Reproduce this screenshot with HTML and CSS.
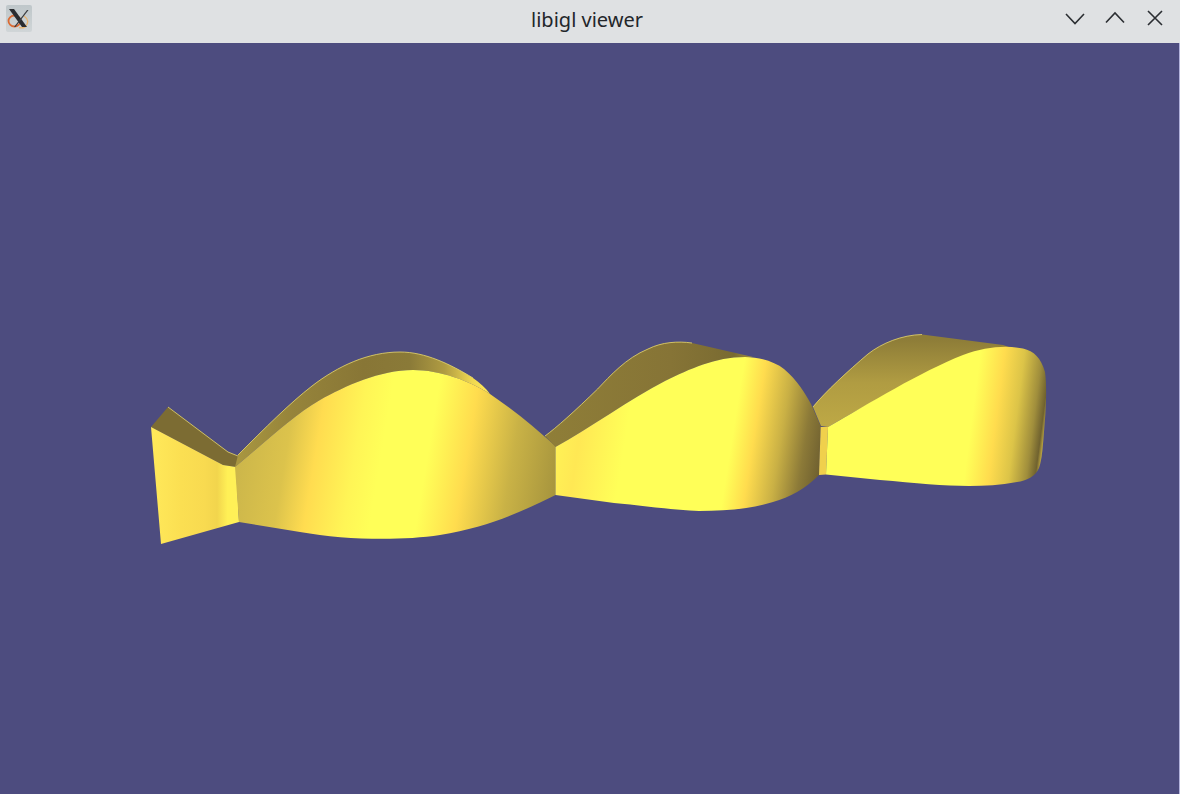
FILE: index.html
```html
<!DOCTYPE html>
<html lang="en">
<head>
<meta charset="utf-8">
<title>libigl viewer</title>
<link rel="stylesheet" href="styles.css">
</head>
<body>
<div class="window">
  <header class="titlebar">
    <svg class="app-icon" width="26" height="27" viewBox="0 0 26 27">
      <defs>
        <linearGradient id="tile" x1="0" y1="0" x2="0" y2="1">
          <stop offset="0" stop-color="#bfc7ca"/><stop offset="1" stop-color="#d0d5d7"/>
        </linearGradient>
      </defs>
      <rect width="26" height="27" rx="2" fill="url(#tile)"/>
      <ellipse cx="8.5" cy="16" rx="6" ry="5.5" fill="none" stroke="#dc6a32" stroke-width="1.8"/>
      <path d="M18 11 q7 5 1 11 q-3 1.500 -6 0.500" fill="none" stroke="#e9b470" stroke-width="1.4"/>
      <path d="M3 4 H8 L21 22 H16 Z" fill="#2a2c30"/>
      <path d="M21 5 H22.500 L9.500 22 H8 Z" fill="#3a3c40"/>
    </svg>
    <span class="title">libigl viewer</span>
    <div class="controls">
      <svg class="control" viewBox="0 0 40 36"><path d="M11 14 L20 23.500 L29 14" class="glyph"/></svg>
      <svg class="control" viewBox="0 0 40 36"><path d="M11 22.500 L20 13 L29 22.500" class="glyph"/></svg>
      <svg class="control" viewBox="0 0 40 36"><path d="M13 11 L27 25 M27 11 L13 25" class="glyph"/></svg>
    </div>
  </header>
  <main class="viewport">
    <svg class="scene" width="1179" height="751" viewBox="0 43 1179 751">
      <defs>
        <linearGradient id="g1" gradientUnits="userSpaceOnUse" x1="151" y1="0" x2="238" y2="0">
          <stop offset="0" stop-color="#ffe95a"/><stop offset=".35" stop-color="#fbdf52"/><stop offset=".62" stop-color="#f8da50"/><stop offset=".76" stop-color="#f2d54d"/><stop offset=".88" stop-color="#fff056"/><stop offset="1" stop-color="#fff058"/>
        </linearGradient>
        <linearGradient id="g2" gradientUnits="userSpaceOnUse" x1="235" y1="423" x2="556" y2="476">
          <stop offset="0" stop-color="#c9b44a"/><stop offset=".17" stop-color="#dcc34c"/><stop offset=".26" stop-color="#ffdc50"/><stop offset=".38" stop-color="#fff556"/><stop offset=".46" stop-color="#ffff58"/><stop offset=".6" stop-color="#ffff58"/><stop offset=".72" stop-color="#ffdc4e"/><stop offset=".86" stop-color="#c9b246"/><stop offset="1" stop-color="#a8963e"/>
        </linearGradient>
        <linearGradient id="g3" gradientUnits="userSpaceOnUse" x1="555" y1="420" x2="821" y2="462">
          <stop offset="0" stop-color="#fff356"/><stop offset=".1" stop-color="#ffe854"/><stop offset=".27" stop-color="#ffff58"/><stop offset=".66" stop-color="#ffff58"/><stop offset=".74" stop-color="#ffdc4e"/><stop offset=".84" stop-color="#c9b045"/><stop offset=".93" stop-color="#8c7a38"/><stop offset="1" stop-color="#6f6030"/>
        </linearGradient>
        <linearGradient id="g4" gradientUnits="userSpaceOnUse" x1="828" y1="400" x2="1046" y2="428">
          <stop offset="0" stop-color="#ffff58"/><stop offset=".66" stop-color="#ffff58"/><stop offset=".77" stop-color="#ffdc4e"/><stop offset=".86" stop-color="#dcc448"/><stop offset=".94" stop-color="#a08e3c"/><stop offset=".98" stop-color="#70622f"/><stop offset=".995" stop-color="#b8a240"/><stop offset="1" stop-color="#e6d050"/>
        </linearGradient>
        <linearGradient id="b2" gradientUnits="userSpaceOnUse" x1="238" y1="0" x2="490" y2="0">
          <stop offset="0" stop-color="#a89640"/><stop offset=".2" stop-color="#97853b"/><stop offset=".5" stop-color="#887636"/><stop offset=".68" stop-color="#8a7a38"/><stop offset=".82" stop-color="#b09c42"/><stop offset=".93" stop-color="#f0d850"/><stop offset="1" stop-color="#ffe956"/>
        </linearGradient>
        <linearGradient id="b3" gradientUnits="userSpaceOnUse" x1="545" y1="0" x2="755" y2="0">
          <stop offset="0" stop-color="#8f7e38"/><stop offset=".6" stop-color="#867436"/><stop offset=".8" stop-color="#7e6e33"/><stop offset=".9" stop-color="#786a32"/><stop offset="1" stop-color="#a89640"/>
        </linearGradient>
        <linearGradient id="b4" gradientUnits="userSpaceOnUse" x1="0" y1="340" x2="0" y2="425">
          <stop offset="0" stop-color="#8e7d38"/><stop offset=".5" stop-color="#b09c42"/><stop offset="1" stop-color="#bda845"/>
        </linearGradient>
      </defs>

      <path d="M151 427 L168 407 L228 452 L238 456 L236 467 L223 465 Z" fill="#7c6c33"/>
      <path d="M151 427 L223 465 L236 467 L239 522 L161 544 Z" fill="url(#g1)"/>
      <path class="edge" d="M168 407 L228 452 L238 456"/>

      <path d="M235 467 L238 455 C265 428 290 403 312 386 C338 366 368 352 400 352 C425 352 450 364 473 378 C480 383 486 388 490 394 C470 381 440 370 413 370 C380 370 345 386 320 400 C292 416 262 445 235 467 Z" fill="url(#b2)"/>
      <path d="M235 467 C262 445 292 416 320 400 C345 386 380 370 413 370 C440 370 470 381 490 394 C515 411 535 428 555.500 446 L555.500 495 C525 510 490 527 440 535 C400 541 345 540 300 532 L239 522 Z" fill="url(#g2)"/>
      <path class="edge" d="M238 455 C265 428 290 403 312 386 C338 366 368 352 400 352 C425 352 450 364 473 378"/>

      <path d="M545 436 C556 428 575 411 597.600 389 C610 376 626 358 648 349 C662 342 678 341 692 343 L753 357 L745 357 C715 357 690 369 665 381 C630 399 590 428 555.500 447 Z" fill="url(#b3)"/>
      <path d="M555.500 447 C590 428 630 399 665 381 C690 369 715 357 745 357 C760 357 775 362 784 369 C797 380 805 393 811 404 L820.700 426 L819 475 C805 489 790 497 773 502 C750 509 725 511 699 511 C670 510 640 505 614 503 L555.500 495 Z" fill="url(#g3)"/>
      <path class="edge" d="M545 436 C556 428 575 411 597.600 389 C610 376 626 358 648 349 C662 342 678 341 692 343"/>

      <path d="M813 407 C825 392 848 371 868 354 C882 343 902 335 922 334.500 L1003 345 L1012 348 C965 352 900 385 828 427 L821 426 Z" fill="url(#b4)"/>
      <path d="M820.700 427 L828 427 L826 474.500 L819 475 Z" fill="#f0d04c"/>
      <path d="M828 427 C870 403 920 372 963 355 C985 347 1005 345 1023 348.500 C1034 351 1041 358 1045 372 C1047 385 1046 410 1044.500 425 C1043 445 1042 460 1039 468 C1036 476 1026 481 1017 482 C1000 485 985 486 969 486 C945 486 915 483 880 480 L826 474.500 Z" fill="url(#g4)"/>
      <path class="edge" d="M813 407 C825 392 848 371 868 354 C882 343 902 335 922 334.500"/>
    </svg>
  </main>
</div>
</body>
</html>
```

FILE: styles.css
```css
html, body {
  margin: 0;
  padding: 0;
  height: 100%;
  overflow: hidden;
}

.window {
  width: 1180px;
  height: 794px;
  display: flex;
  flex-direction: column;
  background: #4d4c7f;
}

.titlebar {
  position: relative;
  flex: 0 0 43px;
  display: flex;
  align-items: center;
  justify-content: center;
  background: #dfe1e3;
  color: #23262a;
  font-family: "Noto Sans", sans-serif;
  font-size: 20px;
}

.app-icon {
  position: absolute;
  left: 6px;
  top: 5px;
}

.title {
  position: relative;
  left: -3px;
  top: -2px;
}

.controls {
  position: absolute;
  right: 5px;
  top: 0;
  display: flex;
}

.control {
  display: block;
  width: 40px;
  height: 36px;
}

.glyph {
  fill: none;
  stroke: #2b2e32;
  stroke-width: 1.6;
}

.viewport {
  flex: 1;
  min-height: 0;
  background: #4d4c7f;
  border-right: 1px solid #b3b3dd;
}

.scene {
  display: block;
}

.edge {
  fill: none;
  stroke: #e8d86a;
  stroke-width: 0.8;
}
```
